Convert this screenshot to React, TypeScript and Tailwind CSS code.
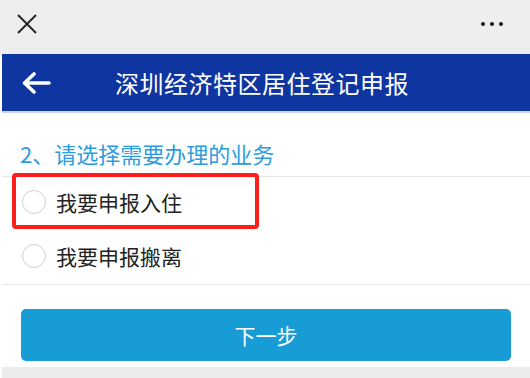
import React from "react";

export default function App() {
  return (
    <div
      className="w-[530px] h-[378px] bg-white overflow-hidden relative"
      style={{ fontFamily: '"Noto Sans CJK SC", "Noto Sans", sans-serif' }}
    >
      {/* top gray bar */}
      <div className="h-[54px] bg-[#ededed] flex items-center justify-between pl-[17px] pr-[27px]">
        <svg width="20" height="20" viewBox="0 0 20 20" className="-mt-[6px]">
          <path d="M1 1 L19 19 M19 1 L1 19" stroke="#1f1f1f" strokeWidth="1.8" fill="none" />
        </svg>
        <div className="flex items-center gap-[4.5px] -mt-[6px]">
          <span className="w-[4.5px] h-[4.5px] rounded-full bg-[#1a1a1a]" />
          <span className="w-[4.5px] h-[4.5px] rounded-full bg-[#1a1a1a]" />
          <span className="w-[4.5px] h-[4.5px] rounded-full bg-[#1a1a1a]" />
        </div>
      </div>

      <div className="pl-[2px]">
        {/* blue title bar */}
        <div className="h-[59px] bg-[#0e35a0] flex items-center border-b-[2px] border-[#c9d3ef]">
          <svg width="32" height="22" viewBox="0 0 32 22" className="ml-[18px] mt-[1px]">
            <path
              d="M29 11 H5 M14 2 L4.5 11 L14 20"
              stroke="#ffffff"
              strokeWidth="3.6"
              strokeLinecap="round"
              strokeLinejoin="round"
              fill="none"
            />
          </svg>
          <span className="ml-[63px] text-white text-[24px] tracking-[0.5px] leading-[30px] mt-[1px]">
            深圳经济特区居住登记申报
          </span>
        </div>

        {/* section heading */}
        <div className="pt-[28px] pb-[11px] pl-[18px] border-b border-[#e6e6e6]">
          <span className="text-[22px] leading-[24px] text-[#2b9de0] block">2、请选择需要办理的业务</span>
        </div>

        {/* options */}
        <div className="h-[54px] flex items-center pl-[20px]">
          <span className="w-[24px] h-[24px] rounded-full border border-[#cfcfcf] mt-[-4px]" />
          <span className="ml-[10px] text-[21px] leading-[26px] text-[#222222] mt-[-4px]">我要申报入住</span>
        </div>
        <div className="h-[54px] flex items-center pl-[20px] border-b border-[#e6e6e6]">
          <span className="w-[24px] h-[24px] rounded-full border border-[#cfcfcf] mt-[-4px]" />
          <span className="ml-[10px] text-[21px] leading-[26px] text-[#222222] mt-[-4px]">我要申报搬离</span>
        </div>

        {/* button */}
        <div className="mt-[24px] mx-[19px] h-[52px] rounded-[5px] bg-[#189cd6] flex items-center justify-center">
          <span className="text-white text-[21px] leading-[26px]">下一步</span>
        </div>

        {/* bottom gray */}
        <div className="mt-[6px] h-[12px] bg-[#ececec]" />
      </div>

      {/* red annotation box */}
      <div className="absolute left-[12px] top-[173px] w-[247px] h-[56px] border-[4px] border-[#ff1c1c] rounded-[4px]" />
    </div>
  );
}
